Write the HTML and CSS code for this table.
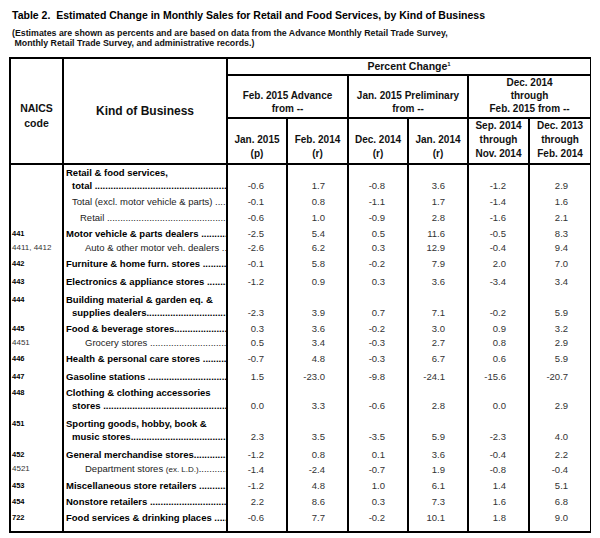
FILE: index.html
```html
<!DOCTYPE html>
<html lang="en">
<head>
    <meta charset="UTF-8">
    <meta name="viewport" content="width=device-width, initial-scale=1.0">
    <title>Table 2. Estimated Change in Monthly Sales</title>
    <link rel="stylesheet" href="styles.css">
</head>
<body>
    <h1 class="title">Table 2.&nbsp; Estimated Change in Monthly Sales for Retail and Food Services, by Kind of Business</h1>
    <p class="note">(Estimates are shown as percents and are based on data from the Advance Monthly Retail Trade Survey,<br>&nbsp;Monthly Retail Trade Survey, and administrative records.)</p>

    <table class="sales">
        <colgroup>
            <col class="c-code">
            <col class="c-kind">
            <col class="c-num">
            <col class="c-num2">
            <col class="c-num">
            <col class="c-num">
            <col class="c-num2">
            <col class="c-last">
        </colgroup>
        <thead>
            <tr class="h-top">
                <th rowspan="3" class="code-h">NAICS<br>code</th>
                <th rowspan="3" class="kind-h">Kind of Business</th>
                <th colspan="6" class="pct">Percent Change<sup>1</sup></th>
            </tr>
            <tr class="h-group">
                <th colspan="2">Feb. 2015 Advance<br>from --</th>
                <th colspan="2">Jan. 2015 Preliminary<br>from --</th>
                <th colspan="2">Dec. 2014<br>through<br>Feb. 2015 from --</th>
            </tr>
            <tr class="h-sub">
                <th>Jan. 2015<br>(p)</th>
                <th>Feb. 2014<br>(r)</th>
                <th>Dec. 2014<br>(r)</th>
                <th>Jan. 2014<br>(r)</th>
                <th>Sep. 2014<br>through<br>Nov. 2014</th>
                <th>Dec. 2013<br>through<br>Feb. 2014</th>
            </tr>
        </thead>
        <tbody>
            <tr class="first">
                <td class="code"></td>
                <td class="kind cat">Retail &amp; food services,<div class="lead i1">total </div></td>
                <td class="num">-0.6</td><td class="num">1.7</td><td class="num">-0.8</td><td class="num">3.6</td><td class="num">-1.2</td><td class="num">2.9</td>
            </tr>
            <tr>
                <td class="code"></td>
                <td class="kind"><div class="lead i1">Total (excl. motor vehicle &amp; parts) </div></td>
                <td class="num">-0.1</td><td class="num">0.8</td><td class="num">-1.1</td><td class="num">1.7</td><td class="num">-1.4</td><td class="num">1.6</td>
            </tr>
            <tr>
                <td class="code"></td>
                <td class="kind"><div class="lead i2">Retail </div></td>
                <td class="num">-0.6</td><td class="num">1.0</td><td class="num">-0.9</td><td class="num">2.8</td><td class="num">-1.6</td><td class="num">2.1</td>
            </tr>
            <tr>
                <td class="code">441</td>
                <td class="kind cat"><div class="lead">Motor vehicle &amp; parts dealers </div></td>
                <td class="num">-2.5</td><td class="num">5.4</td><td class="num">0.5</td><td class="num">11.6</td><td class="num">-0.5</td><td class="num">8.3</td>
            </tr>
            <tr class="near">
                <td class="code sub">4411, 4412</td>
                <td class="kind"><div class="lead i3">Auto &amp; other motor veh. dealers </div></td>
                <td class="num">-2.6</td><td class="num">6.2</td><td class="num">0.3</td><td class="num">12.9</td><td class="num">-0.4</td><td class="num">9.4</td>
            </tr>
            <tr>
                <td class="code">442</td>
                <td class="kind cat"><div class="lead">Furniture &amp; home furn. stores </div></td>
                <td class="num">-0.1</td><td class="num">5.8</td><td class="num">-0.2</td><td class="num">7.9</td><td class="num">2.0</td><td class="num">7.0</td>
            </tr>
            <tr class="wide">
                <td class="code">443</td>
                <td class="kind cat"><div class="lead">Electronics &amp; appliance stores </div></td>
                <td class="num">-1.2</td><td class="num">0.9</td><td class="num">0.3</td><td class="num">3.6</td><td class="num">-3.4</td><td class="num">3.4</td>
            </tr>
            <tr class="wide">
                <td class="code">444</td>
                <td class="kind cat">Building material &amp; garden eq. &amp;<div class="lead i1">supplies dealers</div></td>
                <td class="num">-2.3</td><td class="num">3.9</td><td class="num">0.7</td><td class="num">7.1</td><td class="num">-0.2</td><td class="num">5.9</td>
            </tr>
            <tr>
                <td class="code">445</td>
                <td class="kind cat"><div class="lead">Food &amp; beverage stores</div></td>
                <td class="num">0.3</td><td class="num">3.6</td><td class="num">-0.2</td><td class="num">3.0</td><td class="num">0.9</td><td class="num">3.2</td>
            </tr>
            <tr class="near">
                <td class="code sub">4451</td>
                <td class="kind"><div class="lead i3">Grocery stores </div></td>
                <td class="num">0.5</td><td class="num">3.4</td><td class="num">-0.3</td><td class="num">2.7</td><td class="num">0.8</td><td class="num">2.9</td>
            </tr>
            <tr>
                <td class="code">446</td>
                <td class="kind cat"><div class="lead">Health &amp; personal care stores </div></td>
                <td class="num">-0.7</td><td class="num">4.8</td><td class="num">-0.3</td><td class="num">6.7</td><td class="num">0.6</td><td class="num">5.9</td>
            </tr>
            <tr class="wide">
                <td class="code">447</td>
                <td class="kind cat"><div class="lead">Gasoline stations </div></td>
                <td class="num">1.5</td><td class="num">-23.0</td><td class="num">-9.8</td><td class="num">-24.1</td><td class="num">-15.6</td><td class="num">-20.7</td>
            </tr>
            <tr>
                <td class="code">448</td>
                <td class="kind cat">Clothing &amp; clothing accessories<div class="lead i1">stores </div></td>
                <td class="num">0.0</td><td class="num">3.3</td><td class="num">-0.6</td><td class="num">2.8</td><td class="num">0.0</td><td class="num">2.9</td>
            </tr>
            <tr class="wide">
                <td class="code">451</td>
                <td class="kind cat">Sporting goods, hobby, book &amp;<div class="lead i1">music stores</div></td>
                <td class="num">2.3</td><td class="num">3.5</td><td class="num">-3.5</td><td class="num">5.9</td><td class="num">-2.3</td><td class="num">4.0</td>
            </tr>
            <tr class="wide">
                <td class="code">452</td>
                <td class="kind cat"><div class="lead">General merchandise stores</div></td>
                <td class="num">-1.2</td><td class="num">0.8</td><td class="num">0.1</td><td class="num">3.6</td><td class="num">-0.4</td><td class="num">2.2</td>
            </tr>
            <tr class="near">
                <td class="code sub">4521</td>
                <td class="kind"><div class="lead i3">Department stores <small>(ex. L.D.)</small></div></td>
                <td class="num">-1.4</td><td class="num">-2.4</td><td class="num">-0.7</td><td class="num">1.9</td><td class="num">-0.8</td><td class="num">-0.4</td>
            </tr>
            <tr>
                <td class="code">453</td>
                <td class="kind cat"><div class="lead">Miscellaneous store retailers </div></td>
                <td class="num">-1.2</td><td class="num">4.8</td><td class="num">1.0</td><td class="num">6.1</td><td class="num">1.4</td><td class="num">5.1</td>
            </tr>
            <tr>
                <td class="code">454</td>
                <td class="kind cat"><div class="lead">Nonstore retailers </div></td>
                <td class="num">2.2</td><td class="num">8.6</td><td class="num">0.3</td><td class="num">7.3</td><td class="num">1.6</td><td class="num">6.8</td>
            </tr>
            <tr>
                <td class="code">722</td>
                <td class="kind cat"><div class="lead">Food services &amp; drinking places </div></td>
                <td class="num">-0.6</td><td class="num">7.7</td><td class="num">-0.2</td><td class="num">10.1</td><td class="num">1.8</td><td class="num">9.0</td>
            </tr>
        </tbody>
    </table>
</body>
</html>
```

FILE: styles.css
```css
body {
    margin: 8px 9px;
    font-family: "Liberation Sans", Arial, sans-serif;
    color: #000;
    background: #fff;
}

.title {
    margin: 0;
    padding-left: 3px;
    font-size: 10.5px;
    line-height: 14px;
    font-weight: bold;
}

.note {
    margin: 6px 0 0;
    padding-left: 3px;
    font-size: 8.8px;
    line-height: 10px;
    font-weight: bold;
    color: #111;
}

.sales {
    margin-top: 9px;
    width: 582px;
    border-collapse: collapse;
    table-layout: fixed;
    border: 2px solid #000;
}

.c-code { width: 53px; }
.c-kind { width: 164px; }
.c-num { width: 60px; }
.c-num2 { width: 61px; }
.c-last { width: 62px; }

/* header */
.sales th {
    border: 2px solid #000;
    padding: 0;
    font-size: 10px;
    line-height: 13px;
    font-weight: bold;
    text-align: center;
    color: #111;
}

.code-h {
    vertical-align: middle;
    padding-top: 10px !important;
    line-height: 15px !important;
    font-size: 10.5px !important;
}

.kind-h {
    font-size: 12px !important;
    vertical-align: middle;
}

.h-top th.pct {
    height: 15px;
    font-size: 10.5px;
    vertical-align: middle;
}

.pct sup {
    font-size: 6px;
    line-height: 0;
}

.h-group th {
    height: 36px;
    vertical-align: bottom;
    padding-bottom: 2px;
}

.h-sub th {
    height: 41px;
    vertical-align: bottom;
    line-height: 14px;
    padding-bottom: 2px;
}

/* body */
.sales td {
    border-left: 2px solid #000;
    border-right: 2px solid #000;
    padding: 3px 0 0;
    line-height: 13px;
    vertical-align: top;
}

.sales tr.first td { padding-top: 1px; }
.sales tr.near td { padding-top: 1px; }
.sales tr.wide td { padding-top: 5px; }
.sales tbody tr:last-child td { padding-bottom: 7px; }

.code {
    padding-left: 1px !important;
    font-size: 7.5px;
    font-weight: bold;
    white-space: nowrap;
}

.code.sub {
    font-weight: normal;
    font-size: 8px;
    color: #333;
}

.kind {
    padding-left: 2px !important;
    font-size: 9.5px;
    color: #222;
}

.kind.cat {
    font-weight: bold;
    color: #000;
}

.lead {
    white-space: nowrap;
    overflow: hidden;
}

.lead::after {
    content: "..........................................................................................";
}

.lead small {
    font-size: 8px;
}

.i1 { padding-left: 6px; }
.i2 { padding-left: 14px; }
.i3 { padding-left: 19px; }

.num {
    text-align: right;
    vertical-align: bottom !important;
    padding-right: 22px !important;
    font-size: 9.5px;
    color: #333;
}
```
